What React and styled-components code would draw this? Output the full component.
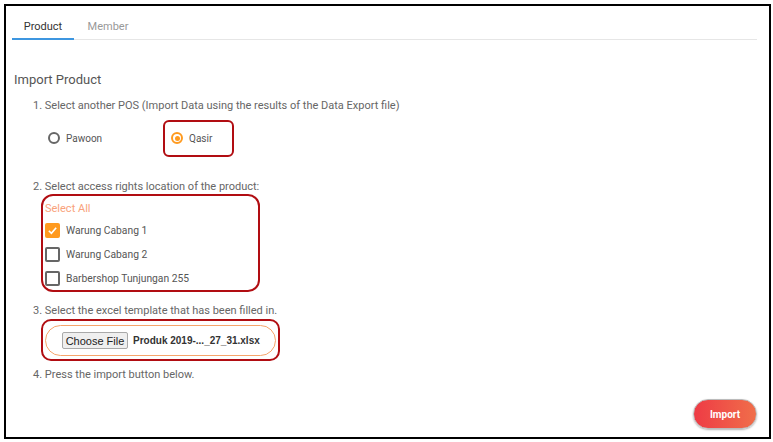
import React, { useState } from "react";
import styled, { createGlobalStyle } from "styled-components";

const locations = ["Warung Cabang 1", "Warung Cabang 2", "Barbershop Tunjungan 255"];

export default function App() {
  const [tab, setTab] = useState("Product");
  const [pos, setPos] = useState("Qasir");
  const [checked, setChecked] = useState({ "Warung Cabang 1": true });

  return (
    <>
      <GlobalStyle />
      <Frame>
        <Tabs>
          {["Product", "Member"].map((t) => (
            <Tab key={t} active={t === tab} onClick={() => setTab(t)}>
              {t}
            </Tab>
          ))}
        </Tabs>

        <Content>
          <Title>Import Product</Title>

          <Step top={11}>1. Select another POS (Import Data using the results of the Data Export file)</Step>
          <RadioRow>
            <RadioOption width={115} onClick={() => setPos("Pawoon")}>
              <Radio checked={pos === "Pawoon"} />
              Pawoon
            </RadioOption>
            <Highlight>
              <RadioOption onClick={() => setPos("Qasir")}>
                <Radio checked={pos === "Qasir"} />
                Qasir
              </RadioOption>
            </Highlight>
          </RadioRow>

          <Step top={24}>2. Select access rights location of the product:</Step>
          <LocationBox>
            <SelectAll>Select All</SelectAll>
            {locations.map((loc) => (
              <CheckRow
                key={loc}
                onClick={() => setChecked({ ...checked, [loc]: !checked[loc] })}
              >
                <Checkbox checked={!!checked[loc]}>
                  {checked[loc] && (
                    <svg width="11" height="11" viewBox="0 0 12 12">
                      <path d="M2 6.3 L4.8 9 L10 3" fill="none" stroke="#fff" strokeWidth="1.8" />
                    </svg>
                  )}
                </Checkbox>
                {loc}
              </CheckRow>
            ))}
          </LocationBox>

          <Step top={12}>3. Select the excel template that has been filled in.</Step>
          <FileBox>
            <FilePill>
              <ChooseButton>Choose File</ChooseButton>
              <FileName>Produk 2019-..._27_31.xlsx</FileName>
            </FilePill>
          </FileBox>

          <Step top={7}>4. Press the import button below.</Step>
        </Content>

        <Footer>
          <ImportButton>Import</ImportButton>
        </Footer>
      </Frame>
    </>
  );
}

const GlobalStyle = createGlobalStyle`
  html, body {
    margin: 0;
    padding: 0;
    background: #ffffff;
    font-family: Roboto, "Noto Sans", sans-serif;
  }
`;

const Frame = styled.div`
  box-sizing: border-box;
  margin: 4px 0 0 4px;
  width: 767px;
  height: 435px;
  border: 2px solid #000;
  display: flex;
  flex-direction: column;
  padding: 0 12px 8px 6px;
`;

const Tabs = styled.div`
  display: flex;
  border-bottom: 1px solid #e6e6e6;
  height: 34px;
  box-sizing: border-box;
`;

const Tab = styled.div`
  width: ${(p) => (p.active ? "62px" : "68px")};
  display: flex;
  align-items: center;
  justify-content: center;
  font-size: 11px;
  color: ${(p) => (p.active ? "#333" : "#999")};
  border-bottom: 2px solid ${(p) => (p.active ? "#3d96e0" : "transparent")};
  margin-bottom: -1px;
  padding-top: 9px;
  box-sizing: border-box;
  cursor: pointer;
`;

const Content = styled.div`
  padding: 0 0 0 2px;
`;

const Title = styled.div`
  margin-top: 32px;
  font-size: 13px;
  color: #555;
  line-height: 16px;
`;

const Step = styled.div`
  margin: ${(p) => p.top || 9}px 0 0 19px;
  font-size: 11px;
  color: #666;
  line-height: 14px;
`;

const RadioRow = styled.div`
  display: flex;
  align-items: center;
  margin: 7px 0 0 34px;
  height: 36px;
`;

const RadioOption = styled.label`
  display: flex;
  align-items: center;
  gap: 6px;
  width: ${(p) => (p.width ? `${p.width}px` : "auto")};
  font-size: 10px;
  color: #555;
  cursor: pointer;
`;

const Highlight = styled.div`
  box-sizing: border-box;
  width: 71px;
  height: 37px;
  border: 2px solid #b10d12;
  border-radius: 6px;
  display: flex;
  align-items: center;
  padding-left: 6px;
`;

const Radio = styled.span`
  box-sizing: border-box;
  width: 12px;
  height: 12px;
  border-radius: 50%;
  border: 2px solid ${(p) => (p.checked ? "#ff9a1f" : "#666")};
  display: flex;
  align-items: center;
  justify-content: center;
  &::after {
    content: "";
    width: 5px;
    height: 5px;
    border-radius: 50%;
    background: ${(p) => (p.checked ? "#ff9a1f" : "transparent")};
  }
`;

const LocationBox = styled.div`
  box-sizing: border-box;
  margin: 0 0 0 27px;
  width: 219px;
  height: 98px;
  border: 2px solid #b10d12;
  border-radius: 12px;
  padding: 6px 0 0 2px;
`;

const SelectAll = styled.div`
  font-size: 11px;
  color: #f9a27c;
  line-height: 14px;
  margin-bottom: 7px;
`;

const CheckRow = styled.label`
  display: flex;
  align-items: center;
  gap: 6px;
  height: 15px;
  margin-bottom: 9px;
  font-size: 10.3px;
  color: #555;
  cursor: pointer;
`;

const Checkbox = styled.span`
  box-sizing: border-box;
  width: 15px;
  height: 15px;
  border-radius: 2px;
  border: 2px solid ${(p) => (p.checked ? "#ff9a1f" : "#666")};
  background: ${(p) => (p.checked ? "#ff9a1f" : "#fff")};
  display: flex;
  align-items: center;
  justify-content: center;
`;

const FileBox = styled.div`
  box-sizing: border-box;
  margin: 1px 0 0 27px;
  width: 239px;
  height: 42px;
  border: 2px solid #b10d12;
  border-radius: 10px;
  padding: 4px 2px 0 2px;
`;

const FilePill = styled.div`
  box-sizing: border-box;
  height: 31px;
  border: 1px solid #f6a56b;
  border-radius: 16px;
  display: flex;
  align-items: center;
  padding-left: 16px;
  gap: 5px;
`;

const ChooseButton = styled.button`
  font-family: "Liberation Sans", Arial, sans-serif;
  font-size: 11px;
  color: #222;
  background: #efefef;
  border: 1px solid #a9a9a9;
  border-radius: 2px;
  height: 17px;
  width: 66px;
  padding: 0;
`;

const FileName = styled.span`
  font-family: "Liberation Sans", Arial, sans-serif;
  font-size: 10px;
  font-weight: bold;
  color: #333;
`;

const Footer = styled.div`
  margin-top: auto;
  display: flex;
  justify-content: flex-end;
`;

const ImportButton = styled.button`
  width: 64px;
  height: 30px;
  border-radius: 15px;
  border: 1px solid #bbb;
  box-shadow: 0 1px 2px rgba(0, 0, 0, 0.3);
  background: linear-gradient(90deg, #ee3b45 0%, #f06e4a 100%);
  color: #fff;
  font-family: Roboto, sans-serif;
  font-weight: 700;
  font-size: 10px;
  cursor: pointer;
`;
